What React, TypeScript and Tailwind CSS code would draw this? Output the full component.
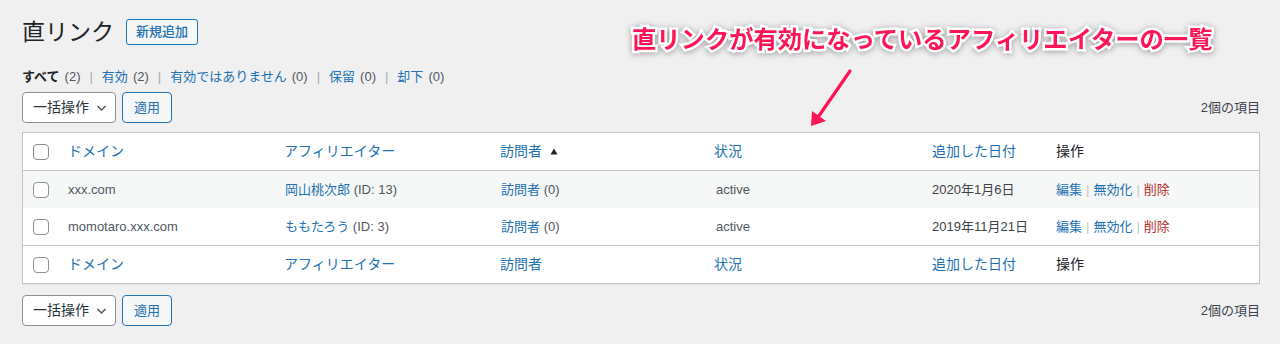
import React from "react";

const FONT = '"Liberation Sans", "Noto Sans CJK JP", sans-serif';

function Checkbox() {
  return <span className="block w-[16px] h-[16px] rounded-[4px] border border-[#8c8f94] bg-white" />;
}

function BulkRow() {
  return (
    <div className="flex items-center justify-between">
      <div className="flex items-center gap-[6px]">
        <div className="h-[31px] w-[94px] rounded-[4px] border border-[#8c8f94] bg-white flex items-center pl-[10px] text-[14px] text-[#2c3338]">
          <span>一括操作</span>
          <svg className="ml-[7px]" width="11" height="8" viewBox="0 0 11 8" fill="none">
            <path d="M1.5 2l4 4 4-4" stroke="#50575e" strokeWidth="1.5" />
          </svg>
        </div>
        <div className="h-[31px] w-[50px] rounded-[4px] border border-[#2271b1] bg-[#f6f7f7] flex items-center justify-center text-[13px] text-[#2271b1]">
          適用
        </div>
      </div>
      <div className="text-[13px] text-[#3c434a]">2個の項目</div>
    </div>
  );
}

const COLS = "grid grid-cols-[35px_216px_216px_216px_216px_124px_1fr] items-center";

function HeadRow({ top, sorted }: { top: boolean; sorted?: boolean }) {
  return (
    <div className={`${COLS} h-[38px] bg-white text-[14px] ${top ? "border-b" : "border-t"} border-[#c3c4c7]`}>
      <div className="pl-[10px]"><Checkbox /></div>
      <div className="pl-[10px] text-[#2271b1]">ドメイン</div>
      <div className="pl-[10px] text-[#2271b1]">アフィリエイター</div>
      <div className="pl-[10px] text-[#2271b1] flex items-center">
        <span>訪問者</span>
        {sorted && (
          <svg className="ml-[8px]" width="8" height="7" viewBox="0 0 8 7">
            <path d="M4 0.5L7.5 6.5H0.5z" fill="#1d2327" />
          </svg>
        )}
      </div>
      <div className="pl-[8px] text-[#2271b1]">状況</div>
      <div className="pl-[10px] text-[#2271b1]">追加した日付</div>
      <div className="pl-[10px] text-[#1d2327]">操作</div>
    </div>
  );
}

function DataRow({ domain, name, id, date, striped }: { domain: string; name: string; id: string; date: string; striped: boolean }) {
  return (
    <div className={`${COLS} h-[37px] text-[13px] text-[#50575e] ${striped ? "bg-[#f6f7f7]" : "bg-white"}`}>
      <div className="pl-[10px]"><Checkbox /></div>
      <div className="pl-[10px]">{domain}</div>
      <div className="pl-[11px]"><span className="text-[#2271b1]">{name}</span> (ID: {id})</div>
      <div className="pl-[11px]"><span className="text-[#2271b1]">訪問者</span> (0)</div>
      <div className="pl-[10px]">active</div>
      <div className="pl-[10px] text-[#3c434a]">{date}</div>
      <div className="pl-[10px] flex items-center">
        <span className="text-[#2271b1]">編集</span>
        <span className="text-[#c3c4c7] px-[4px]">|</span>
        <span className="text-[#2271b1]">無効化</span>
        <span className="text-[#c3c4c7] px-[4px]">|</span>
        <span className="text-[#b32d2e]">削除</span>
      </div>
    </div>
  );
}

function Sep() {
  return <span className="px-[9px] text-[#a7aaad]">|</span>;
}

export default function App() {
  return (
    <div className="relative w-[1280px] h-[344px] bg-[#f0f0f1] overflow-hidden" style={{ fontFamily: FONT }}>
      <div className="pl-[22px] pr-[20px] pt-[17px]">
        <div className="flex items-center">
          <h1 className="text-[23px] leading-[30px] text-[#1d2327] font-normal">直リンク</h1>
          <div className="ml-[12px] h-[26px] px-[9px] rounded-[3px] border border-[#2271b1] bg-[#f6f7f7] text-[13px] font-medium text-[#2271b1] flex items-center">
            新規追加
          </div>
        </div>
        <div className="mt-[21px] text-[13px] leading-[18px] text-[#50575e] flex items-center">
          <span className="font-bold text-[#1d2327]">すべて</span>
          <span className="ml-[5px]">(2)</span>
          <Sep />
          <span className="text-[#2271b1]">有効</span>
          <span className="ml-[5px]">(2)</span>
          <Sep />
          <span className="text-[#2271b1]">有効ではありません</span>
          <span className="ml-[5px]">(0)</span>
          <Sep />
          <span className="text-[#2271b1]">保留</span>
          <span className="ml-[5px]">(0)</span>
          <Sep />
          <span className="text-[#2271b1]">却下</span>
          <span className="ml-[5px]">(0)</span>
        </div>
        <div className="mt-[6px]">
          <BulkRow />
        </div>
        <div className="mt-[9px] border border-[#c3c4c7] bg-white shadow-[0_1px_1px_rgba(0,0,0,0.04)]">
          <HeadRow top sorted />
          <DataRow domain="xxx.com" name="岡山桃次郎" id="13" date="2020年1月6日" striped />
          <DataRow domain="momotaro.xxx.com" name="ももたろう" id="3" date="2019年11月21日" striped={false} />
          <HeadRow top={false} />
        </div>
        <div className="mt-[11px]">
          <BulkRow />
        </div>
      </div>

      <div
        className="absolute left-[632px] top-[24px] text-[24.3px] leading-[32px] font-bold text-[#ff1456] whitespace-nowrap [-webkit-text-stroke:5px_white] [paint-order:stroke_fill] [filter:drop-shadow(0_1px_3px_rgba(0,0,0,0.35))]"
      >
        直リンクが有効になっているアフィリエイターの一覧
      </div>
      <svg className="absolute left-[800px] top-[64px]" width="60" height="70" viewBox="800 64 60 70">
        <path d="M850 71 L814 123" stroke="#ff1456" strokeWidth="3.2" strokeLinecap="round" />
        <path d="M811 126 L812 111 L826 121 Z" fill="#ff1456" />
      </svg>
    </div>
  );
}
